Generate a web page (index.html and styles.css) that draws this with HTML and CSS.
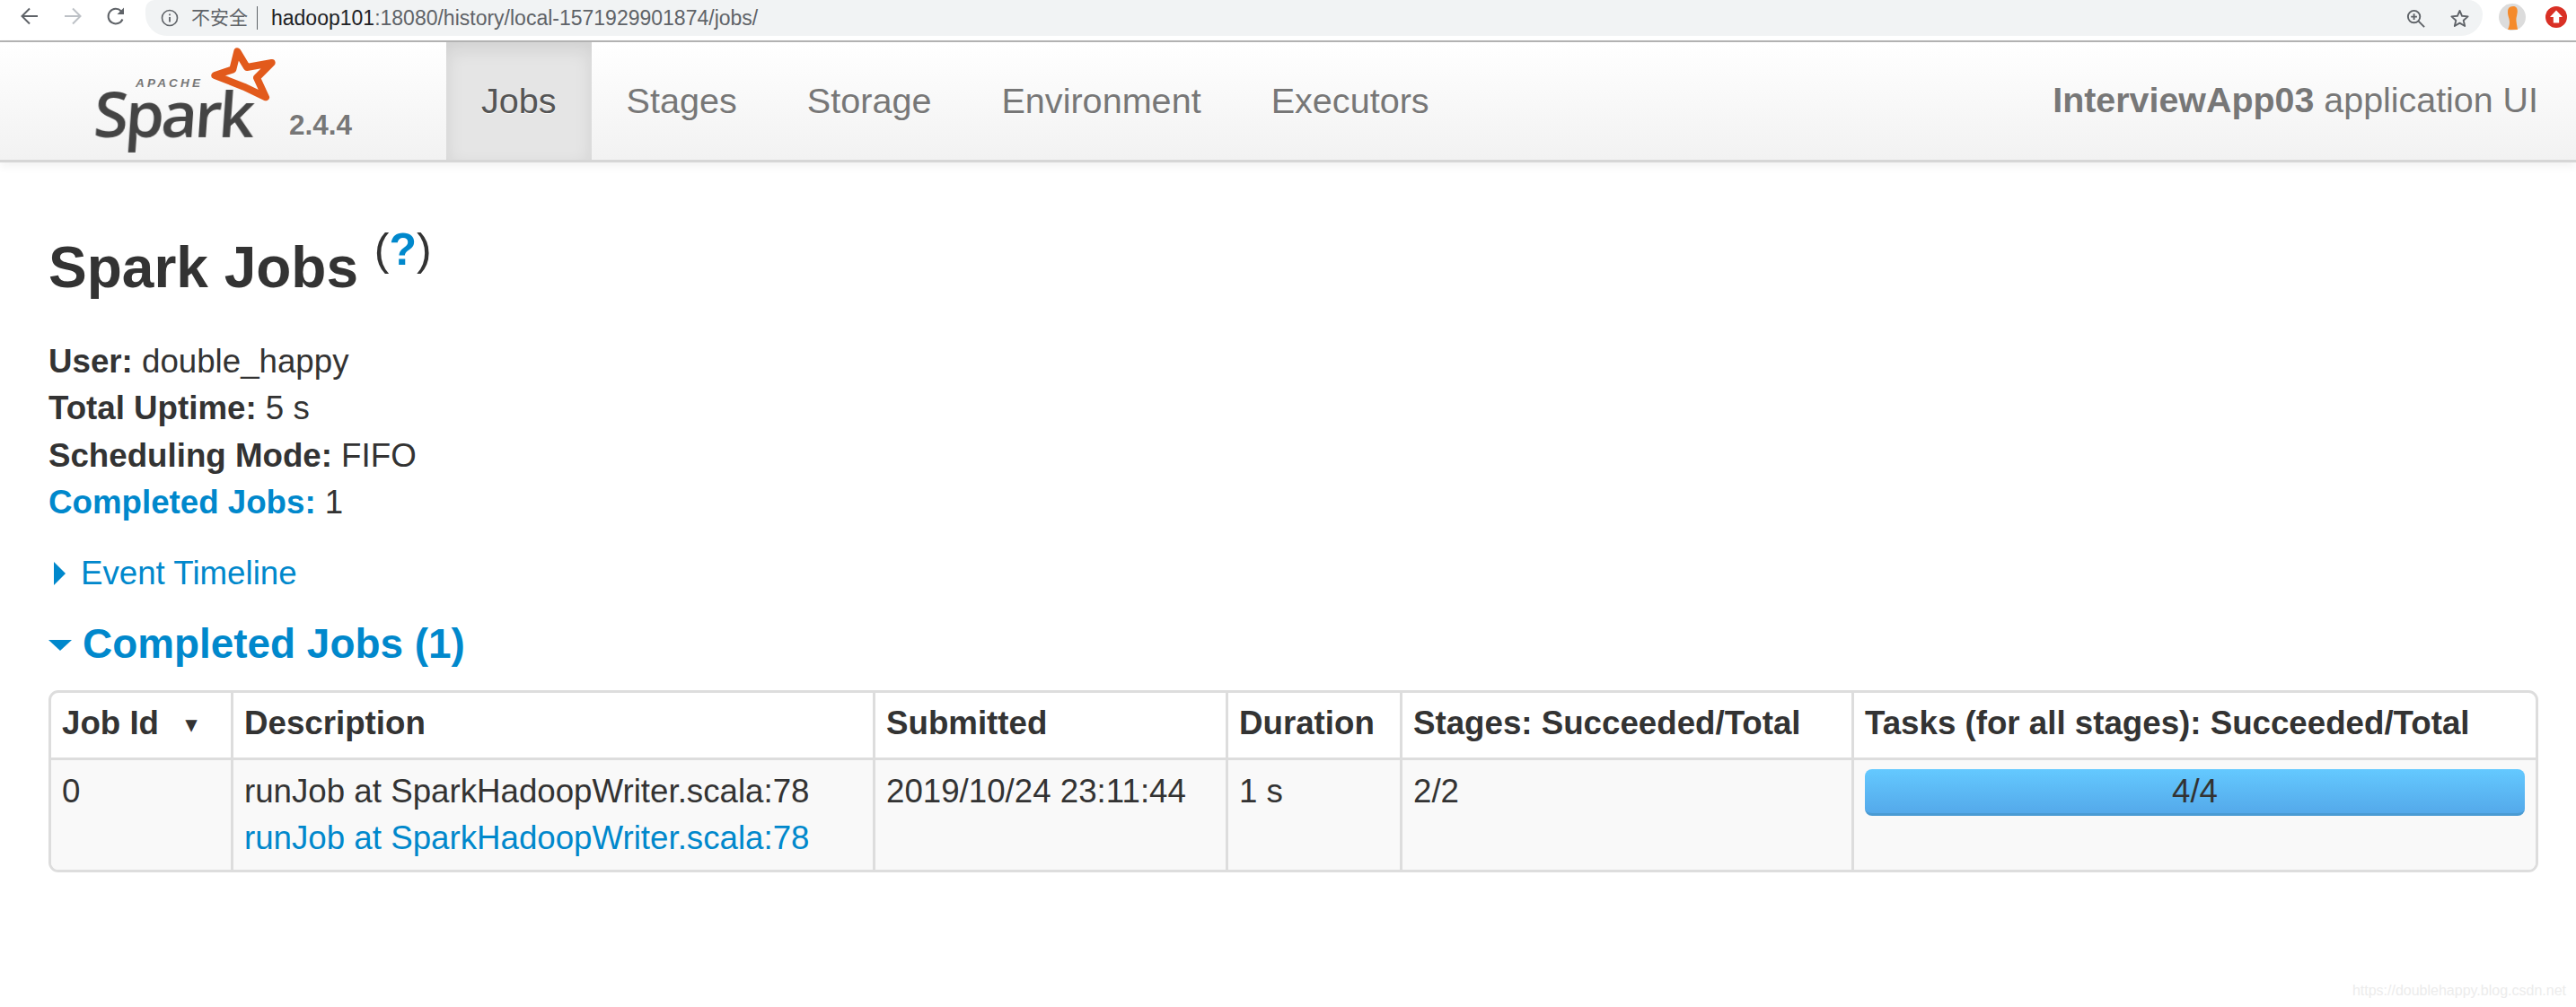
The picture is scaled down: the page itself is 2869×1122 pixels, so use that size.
FILE: index.html
```html
<!DOCTYPE html>
<html lang="en">
<head>
<meta charset="utf-8">
<title>InterviewApp03 - Spark Jobs</title>
<link rel="stylesheet" href="styles.css">
</head>
<body>
<header class="browser">
  <div class="browser-nav">
    <svg class="bicon" viewBox="0 0 24 24"><path d="M21 12H4M12 3.500L3.500 12l8.500 8.500" fill="none" stroke="#5f6368" stroke-width="2"/></svg>
    <svg class="bicon" viewBox="0 0 24 24"><path d="M3 12h17M12 3.500l8.500 8.500-8.500 8.500" fill="none" stroke="#bdc1c6" stroke-width="2"/></svg>
    <svg class="bicon" viewBox="0 0 24 24"><path d="M19.500 15.500A8.300 8.300 0 1 1 18 6.500l1.500 1.800" fill="none" stroke="#5f6368" stroke-width="2"/><path d="M21 2.500V10h-7.500z" fill="#5f6368"/></svg>
  </div>
  <div class="omnibox">
    <svg class="info" viewBox="0 0 20 20"><circle cx="10" cy="10" r="8.500" fill="none" stroke="#5f6368" stroke-width="1.600"/><path d="M10 5.500v1.800M10 9v5.500" stroke="#5f6368" stroke-width="1.800"/></svg>
    <span class="insecure">不安全</span>
    <span class="sep"></span>
    <span class="url"><span class="host">hadoop101</span>:18080/history/local-1571929901874/jobs/</span>
    <span class="omni-actions">
      <svg class="oicon" viewBox="0 0 24 24"><circle cx="10" cy="10" r="7" fill="none" stroke="#5f6368" stroke-width="2"/><path d="M15 15l7 7M6.500 10h7M10 6.500v7" fill="none" stroke="#5f6368" stroke-width="2"/></svg>
      <svg class="oicon" viewBox="0 0 24 24"><path d="M12 3l2.700 6.200 6.800.6-5.100 4.500 1.500 6.600L12 17.400l-5.900 3.500 1.500-6.600-5.100-4.500 6.800-.6z" fill="none" stroke="#5f6368" stroke-width="2" stroke-linejoin="round"/></svg>
    </span>
  </div>
  <div class="browser-ext">
    <svg class="avatar" viewBox="0 0 30 30"><circle cx="15" cy="15" r="15" fill="#dcdcdc"/><path d="M10 9c0-4 2.500-6 6-6s5.500 2.500 4.500 8c-.8 4.500-1.500 6-.8 10 .3 3 1.300 7 1.300 8H10c2-4 2.500-8 1.500-12-1-3.500-1.500-4.500-1.500-8z" fill="#f58a2b"/></svg>
    <svg class="update" viewBox="0 0 24 24"><circle cx="12" cy="12" r="12" fill="#d93025"/><path d="M12 4.500l7 7.500h-3.800v6.500H8.800V12H5z" fill="#fff"/></svg>
  </div>
</header>
<nav class="navbar">
  <div class="brand">
    <svg class="logo-star" viewBox="450 30 240 195"><path d="M553 52L585 105L668 90L618 140L648 205L575 170L478 132L538 112Z" fill="none" stroke="#e25a1c" stroke-width="24" stroke-linejoin="round"/></svg>
    <span class="logo-apache">APACHE</span>
    <span class="logo-spark">Spark</span>
    <span class="version">2.4.4</span>
  </div>
  <ul class="tabs">
    <li class="tab active">Jobs</li>
    <li class="tab">Stages</li>
    <li class="tab">Storage</li>
    <li class="tab">Environment</li>
    <li class="tab">Executors</li>
  </ul>
  <p class="app-title"><strong>InterviewApp03</strong> application UI</p>
</nav>
<main class="content">
  <h3 class="page-title">Spark Jobs <sup class="help">(<a>?</a>)</sup></h3>
  <ul class="summary">
    <li><strong>User:</strong> double_happy</li>
    <li><strong>Total Uptime:</strong> 5 s</li>
    <li><strong>Scheduling Mode:</strong> FIFO</li>
    <li><a><strong>Completed Jobs:</strong></a> 1</li>
  </ul>
  <div class="timeline"><span class="arrow-right"></span><a>Event Timeline</a></div>
  <h4 class="section"><span class="arrow-down"></span><a>Completed Jobs (1)</a></h4>
  <table class="jobs">
    <colgroup>
      <col class="c1"><col class="c2"><col class="c3"><col class="c4"><col class="c5"><col class="c6">
    </colgroup>
    <thead>
      <tr>
        <th>Job Id <span class="sort">▾</span></th>
        <th>Description</th>
        <th>Submitted</th>
        <th>Duration</th>
        <th>Stages: Succeeded/Total</th>
        <th>Tasks (for all stages): Succeeded/Total</th>
      </tr>
    </thead>
    <tbody>
      <tr>
        <td>0</td>
        <td>runJob at SparkHadoopWriter.scala:78<br><a>runJob at SparkHadoopWriter.scala:78</a></td>
        <td>2019/10/24 23:11:44</td>
        <td>1 s</td>
        <td>2/2</td>
        <td><div class="progress">4/4</div></td>
      </tr>
    </tbody>
  </table>
</main>
<div class="watermark">https://doublehappy.blog.csdn.net</div>
</body>
</html>
```
FILE: styles.css
```css
* { box-sizing: border-box; }
html, body { margin: 0; padding: 0; }
body {
  position: relative;
  height: 1122px;
  overflow: hidden;
  background: #fff;
  color: #333;
  font-family: "Liberation Sans", Arial, sans-serif;
  font-size: 36.7px;
  line-height: 52.4px;
}
a { color: #0088cc; }
ul { list-style: none; margin: 0; padding: 0; }

.browser {
  display: flex;
  height: 47px;
  border-bottom: 2px solid #b4b4b4;
  background: #fff;
}
.browser-nav {
  display: flex;
  align-items: center;
  gap: 24px;
  width: 162px;
  height: 36px;
  padding-left: 21px;
}
.bicon { width: 24px; height: 24px; }
.omnibox {
  display: flex;
  align-items: center;
  width: 2603px;
  height: 40px;
  padding-left: 17px;
  border-radius: 10px 16px 24px 24px;
  background: #f1f3f4;
  font-family: "Liberation Sans", "Noto Sans CJK SC", sans-serif;
  font-size: 23px;
  line-height: 40px;
  color: #5f6368;
}
.info { width: 20px; height: 20px; margin-right: 14px; }
.insecure { font-size: 21px; }
.sep { width: 1px; height: 26px; margin: 0 15px 0 10px; background: #5f6368; }
.host { color: #202124; }
.omni-actions { display: flex; align-items: center; gap: 26px; margin-left: auto; margin-right: 14px; }
.oicon { width: 23px; height: 23px; }
.browser-ext { display: flex; align-items: center; gap: 22px; height: 38px; padding-left: 18px; }
.avatar { width: 30px; height: 30px; }
.update { width: 24px; height: 24px; }

.navbar {
  display: flex;
  align-items: stretch;
  height: 134px;
  border-bottom: 3px solid #d6d6d6;
  background: linear-gradient(#ffffff, #f2f2f2);
  box-shadow: 0 4px 10px rgba(0, 0, 0, .06);
  color: #777;
  text-shadow: 0 1px 0 #fff;
}
.brand { position: relative; width: 497px; }
.logo-star { position: absolute; left: 230px; top: 3px; width: 80px; height: 65px; filter: blur(.4px); }
.logo-apache {
  position: absolute;
  left: 151px;
  top: 39px;
  font-size: 13.500px;
  line-height: 14px;
  font-style: italic;
  font-weight: 700;
  letter-spacing: 3.200px;
  color: #777;
  text-shadow: none;
}
.logo-spark {
  position: absolute;
  left: 105px;
  top: 54px;
  font-family: "Open Sans", sans-serif;
  font-size: 70px;
  line-height: 50px;
  font-weight: 600;
  letter-spacing: -3.500px;
  color: #444;
  text-shadow: none;
  transform: skewX(-4deg);
  filter: blur(.4px);
}
.version {
  position: absolute;
  left: 322px;
  top: 72px;
  font-size: 31.500px;
  line-height: 40px;
  font-weight: 700;
}
.tabs { display: flex; }
.tab { padding: 39px 39px 0; font-size: 39.600px; line-height: 52px; }
.tab.active {
  color: #555;
  background: #e5e5e5;
  box-shadow: inset 0 8px 20px rgba(0, 0, 0, .09);
}
.app-title { margin: 0 42px 0 auto; padding-top: 39px; font-size: 39.400px; line-height: 50px; }

.content { padding: 0 42px 0 54px; }
.page-title {
  margin: 82px 0 0;
  font-size: 64px;
  line-height: 70px;
  font-weight: 700;
  color: #333;
}
.help { font-size: 50px; line-height: 0; vertical-align: 25px; font-weight: 400; }
.help a { font-weight: 700; }
.summary { margin-top: 44px; }
.timeline { display: flex; align-items: center; margin-top: 26px; }
.arrow-right {
  width: 0;
  height: 0;
  margin: 0 17px 0 6px;
  border-style: solid;
  border-width: 13px 0 13px 13px;
  border-color: transparent transparent transparent #0088cc;
}
.section {
  display: flex;
  align-items: center;
  margin: 26px 0 0;
  font-size: 45.900px;
  line-height: 52px;
  font-weight: 700;
}
.arrow-down {
  width: 0;
  height: 0;
  margin: 4px 12px 0 0;
  border-style: solid;
  border-width: 12px 13px 0 13px;
  border-color: #0088cc transparent transparent transparent;
}
.jobs {
  width: 2773px;
  margin-top: 26px;
  table-layout: fixed;
  border-collapse: separate;
  border-spacing: 0;
  border: 3px solid #dddddd;
  border-radius: 11px;
  overflow: hidden;
}
.c1 { width: 200px; }
.c2 { width: 715px; }
.c3 { width: 393px; }
.c4 { width: 194px; }
.c5 { width: 503px; }
.c6 { width: auto; }
.jobs th, .jobs td {
  padding: 0 12px;
  text-align: left;
  vertical-align: top;
  border-left: 3px solid #dddddd;
}
.jobs th:first-child, .jobs td:first-child { border-left: 0; }
.jobs th { height: 72px; padding-top: 8px; font-weight: 700; }
.jobs td {
  height: 125px;
  padding-top: 9px;
  border-top: 3px solid #dddddd;
  background: #f9f9f9;
}
.jobs td:last-child { padding-top: 10px; }
.sort { margin-left: 20px; font-size: 24px; vertical-align: 3px; }
.progress {
  height: 52px;
  border-radius: 8px;
  border-bottom: 3px solid #4a9bd3;
  background: linear-gradient(#64c9ff, #54a9ea);
  text-align: center;
  line-height: 50px;
}
.watermark {
  position: absolute;
  right: 11px;
  bottom: 7px;
  font-size: 16px;
  line-height: 22px;
  color: #ececec;
}
```
